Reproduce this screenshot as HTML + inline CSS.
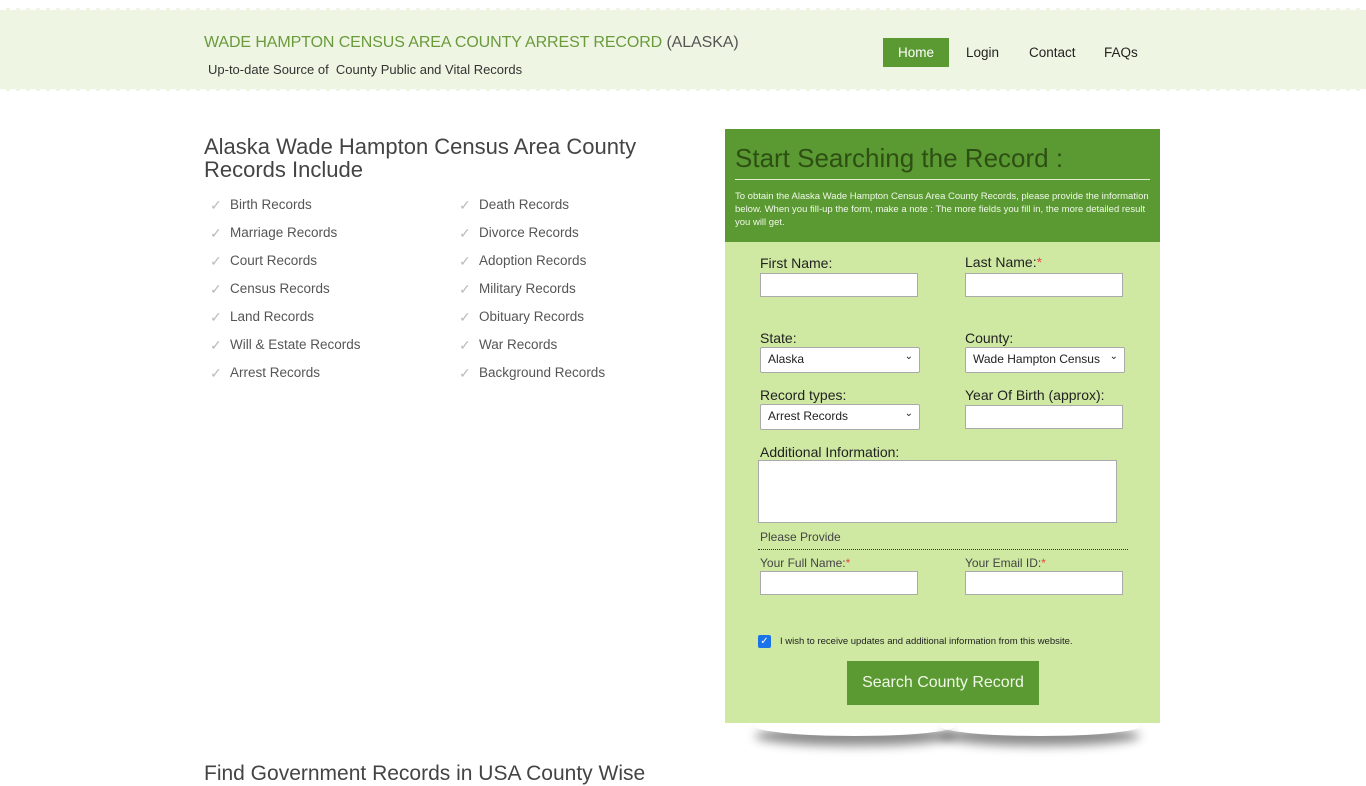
<!DOCTYPE html>
<html><head><meta charset="utf-8"><style>
*{box-sizing:border-box;margin:0;padding:0}
body{width:1366px;height:768px;overflow:hidden;background:#fff;font-family:"Liberation Sans",sans-serif;color:#333;position:relative}
.hdr{position:absolute;left:0;top:8px;width:1366px;height:83px;background:#eef6e3;border-top:2px dashed #fff;border-bottom:2px dashed #fff}
.title{position:absolute;left:204px;top:34px;font-size:16px;color:#6a9a3c;letter-spacing:-0.1px}
.title span{color:#555}
.sub{position:absolute;left:208px;top:62px;font-size:13px;color:#333}
.nav{position:absolute;top:38px;font-size:13.5px;color:#222}
.home{left:883px;width:66px;height:29px;background:#5b9a32;color:#fff;text-align:center;line-height:29px}
h2{position:absolute;left:204px;top:135px;font-size:22px;font-weight:normal;line-height:23px;color:#444;width:480px}
.list{position:absolute;top:196px;font-size:13.5px;color:#555}
.list div{height:28px;line-height:18px;padding-left:26px;position:relative}
.list div:before{content:"✓";position:absolute;left:6px;top:0;color:#bbb;font-size:14px}
.panel{position:absolute;left:725px;top:129px;width:435px;height:594px;background:#cfe9a3}
.ptop{height:113px;background:#5b9a32;padding:12px 10px 0 10px}
.ptop h3{font-size:26px;font-weight:normal;color:#2d4f14;line-height:34px;border-bottom:1px solid #e0eed0;padding-bottom:4px}
.ptop p{font-size:9.5px;color:#f0f8e8;line-height:13px;margin-top:10px}
.lbl{position:absolute;font-size:14px;color:#222}
.lbl i{color:#e44;font-style:normal}
.inp{position:absolute;background:#fff;border:1px solid #aaa;height:24px;font-size:12px;padding:4px 7px;color:#222}
.inp b{position:absolute;right:6px;top:3px;font-size:10px;font-weight:normal}
.small{font-size:12px;color:#444}
.btn{position:absolute;left:847px;top:661px;width:192px;height:44px;background:#5b9a32;color:#f0f8e8;font-size:16px;text-align:center;line-height:44px}
.sh{position:absolute;top:716px;width:200px;height:20px;border-radius:50%;box-shadow:0 10px 10px rgba(0,0,0,.45)}
.foot{position:absolute;left:204px;top:762px;font-size:21px;color:#444}
</style></head><body>
<div class="hdr"></div>
<div class="title">WADE HAMPTON CENSUS AREA COUNTY ARREST RECORD <span>(ALASKA)</span></div>
<div class="sub">Up-to-date Source of&nbsp; County Public and Vital Records</div>
<div class="nav home">Home</div>
<div class="nav" style="left:966px;top:45px">Login</div>
<div class="nav" style="left:1029px;top:45px">Contact</div>
<div class="nav" style="left:1104px;top:45px">FAQs</div>
<h2>Alaska Wade Hampton Census Area County Records Include</h2>
<div class="list" style="left:204px"><div>Birth Records</div><div>Marriage Records</div><div>Court Records</div><div>Census Records</div><div>Land Records</div><div>Will &amp; Estate Records</div><div>Arrest Records</div></div>
<div class="list" style="left:453px"><div>Death Records</div><div>Divorce Records</div><div>Adoption Records</div><div>Military Records</div><div>Obituary Records</div><div>War Records</div><div>Background Records</div></div>
<div class="sh" style="left:755px"></div>
<div class="sh" style="left:940px"></div>
<div class="panel"><div class="ptop"><h3>Start Searching the Record :</h3><p>To obtain the Alaska Wade Hampton Census Area County Records, please provide the information below. When you fill-up the form, make a note : The more fields you fill in, the more detailed result you will get.</p></div></div>
<div class="lbl" style="left:760px;top:255px">First Name:</div>
<div class="lbl" style="left:965px;top:254px">Last Name:<i>*</i></div>
<div class="inp" style="left:760px;top:273px;width:158px"></div>
<div class="inp" style="left:965px;top:273px;width:158px"></div>
<div class="lbl" style="left:760px;top:330px">State:</div>
<div class="lbl" style="left:965px;top:330px">County:</div>
<div class="inp" style="left:760px;top:347px;width:160px;height:26px;border-radius:2px">Alaska<b>⌄</b></div>
<div class="inp" style="left:965px;top:347px;width:160px;height:26px;border-radius:2px;overflow:hidden;white-space:nowrap">Wade Hampton Census<b style="background:#fff">⌄</b></div>
<div class="lbl" style="left:760px;top:387px">Record types:</div>
<div class="lbl" style="left:965px;top:387px">Year Of Birth (approx):</div>
<div class="inp" style="left:760px;top:404px;width:160px;height:26px;border-radius:2px">Arrest Records<b>⌄</b></div>
<div class="inp" style="left:965px;top:405px;width:158px"></div>
<div class="lbl" style="left:760px;top:444px">Additional Information:</div>
<div class="inp" style="left:758px;top:460px;width:359px;height:63px"></div>
<div class="lbl small" style="left:760px;top:530px">Please Provide</div>
<div style="position:absolute;left:758px;top:549px;width:370px;border-top:1px dotted #333"></div>
<div class="lbl small" style="left:760px;top:556px">Your Full Name:<i>*</i></div>
<div class="lbl small" style="left:965px;top:556px">Your Email ID:<i>*</i></div>
<div class="inp" style="left:760px;top:571px;width:158px"></div>
<div class="inp" style="left:965px;top:571px;width:158px"></div>
<div style="position:absolute;left:758px;top:635px;width:13px;height:13px;background:#1a73e8;border-radius:2px;color:#fff;font-size:10px;line-height:13px;text-align:center">✓</div>
<div class="lbl" style="left:780px;top:636px;font-size:9.5px">I wish to receive updates and additional information from this website.</div>
<div class="btn">Search County Record</div>
<div class="foot">Find Government Records in USA County Wise</div>
</body></html>
